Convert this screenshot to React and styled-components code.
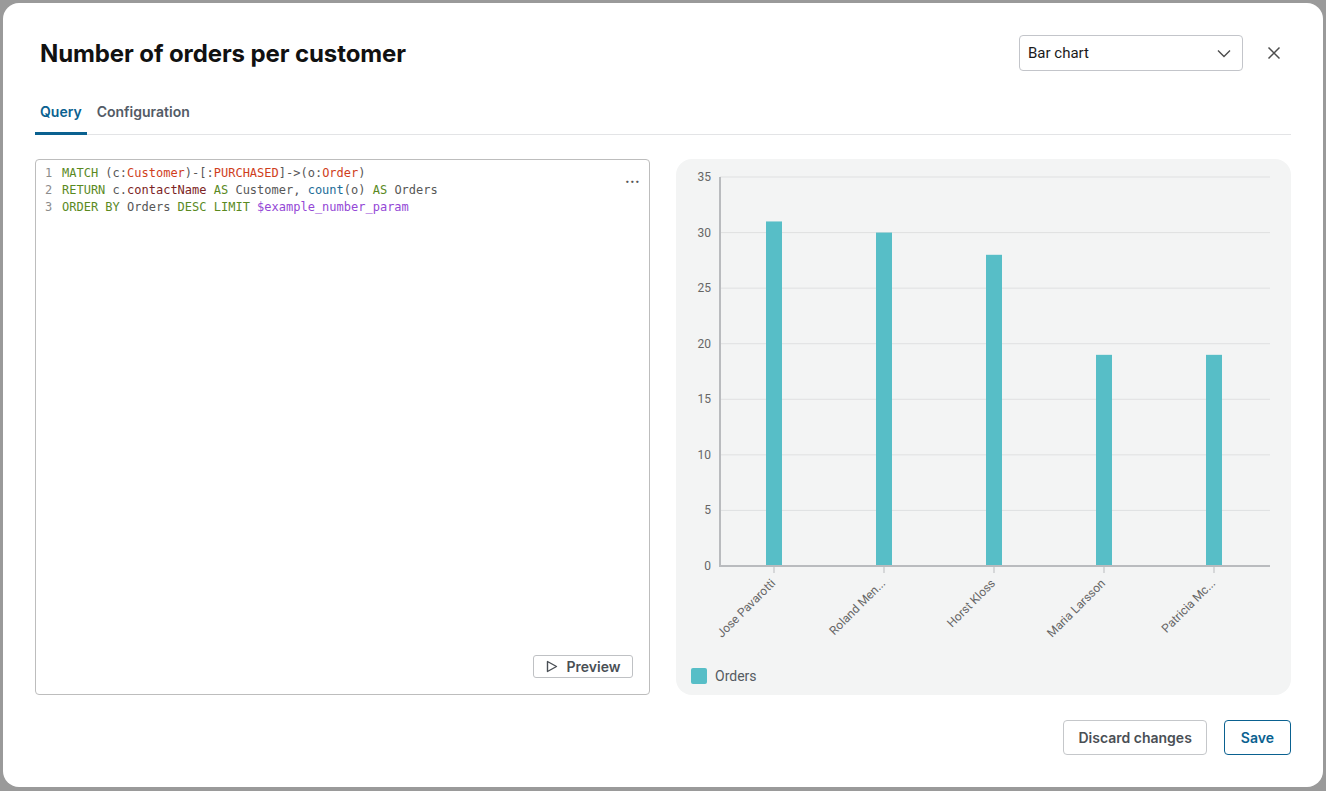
import React from "react";
import styled, { createGlobalStyle } from "styled-components";

const GlobalStyle = createGlobalStyle`
  html, body {
    margin: 0;
    padding: 0;
    background: #9a9a9a;
  }
  * {
    box-sizing: border-box;
  }
`;

const PRIMARY = "#0a6190";

const SBackdrop = styled.div`
  width: 1326px;
  height: 791px;
  padding: 3px;
  background: #9a9a9a;
`;

const SModal = styled.div`
  display: flex;
  flex-direction: column;
  width: 1320px;
  height: 784px;
  padding: 32px;
  background: #fff;
  border-radius: 16px;
  font-family: Inter, "Liberation Sans", sans-serif;
`;

const SHeader = styled.div`
  display: flex;
  align-items: center;
  justify-content: space-between;
  height: 36px;
`;

const STitle = styled.h1`
  margin: 0 0 0 5px;
  font-size: 24px;
  font-weight: 700;
  color: #111;
  letter-spacing: -0.1px;
`;

const SHeaderRight = styled.div`
  display: flex;
  align-items: center;
  gap: 14px;
`;

const SSelect = styled.div`
  display: flex;
  align-items: center;
  justify-content: space-between;
  width: 224px;
  height: 36px;
  padding: 0 10px 0 8px;
  border: 1px solid #c3c5ca;
  border-radius: 4px;
  font-family: Roboto, "Liberation Sans", sans-serif;
  font-size: 15px;
  color: #1a1a1a;
`;

const SIconButton = styled.button`
  display: flex;
  align-items: center;
  justify-content: center;
  width: 34px;
  height: 34px;
  padding: 0;
  border: none;
  background: none;
  color: #4d4d4d;
`;

const STabs = styled.div`
  display: flex;
  gap: 5px;
  margin-top: 18px;
  border-bottom: 1px solid #e3e4e6;
`;

const STab = styled.div`
  display: flex;
  align-items: center;
  height: 46px;
  padding: 2px 5px 0;
  margin-bottom: -1px;
  font-size: 14px;
  font-weight: 600;
  color: ${(p) => (p.$active ? PRIMARY : "#535b66")};
  border-bottom: 3px solid ${(p) => (p.$active ? PRIMARY : "transparent")};
  border-radius: 2px 2px 0 0;
`;

const SContent = styled.div`
  display: grid;
  grid-template-columns: 615px 615px;
  justify-content: space-between;
  margin-top: 24px;
  height: 536px;
`;

const SEditor = styled.div`
  position: relative;
  display: flex;
  flex-direction: column;
  border: 1px solid #bdbdbd;
  border-radius: 4px;
`;

const SCode = styled.div`
  flex: 1;
  padding-top: 5px;
  font-family: "DejaVu Sans Mono", "Liberation Mono", monospace;
  font-size: 12px;
  line-height: 17px;
`;

const SLine = styled.div`
  display: flex;
  white-space: pre;
`;

const SLineNo = styled.span`
  width: 26px;
  padding-left: 9px;
  color: #8c8c8c;
`;

const TOKEN_COLORS = {
  kw: "#5a8a1f",
  label: "#cf3e1c",
  plain: "#575757",
  prop: "#7c2424",
  fn: "#1b6c97",
  param: "#9448d6",
};

const SToken = styled.span`
  color: ${(p) => TOKEN_COLORS[p.$kind]};
`;

const SMore = styled.div`
  position: absolute;
  top: 13px;
  right: 9px;
  font-size: 14px;
  line-height: 10px;
  letter-spacing: 0.3px;
  color: #555;
  font-weight: 700;
`;

const SEditorFooter = styled.div`
  display: flex;
  justify-content: flex-end;
  padding: 0 16px 16px;
`;

const SPreview = styled.button`
  display: flex;
  align-items: center;
  justify-content: center;
  gap: 9px;
  width: 100px;
  height: 23px;
  border: 1px solid #bfc1c4;
  border-radius: 3px;
  background: #fff;
  font-family: Inter, "Liberation Sans", sans-serif;
  font-size: 14px;
  font-weight: 600;
  color: #4a4f55;
`;

const SChartPanel = styled.div`
  display: flex;
  flex-direction: column;
  background: #f3f4f4;
  border-radius: 16px;
  font-family: Roboto, "Liberation Sans", sans-serif;
`;

const SLegend = styled.div`
  display: flex;
  align-items: center;
  gap: 8px;
  margin-top: 9px;
  padding-left: 15px;
  font-size: 14px;
  color: #555b61;
`;

const SSwatch = styled.span`
  width: 16px;
  height: 16px;
  border-radius: 2px;
  background: #57bec7;
`;

const SFooter = styled.div`
  display: flex;
  justify-content: flex-end;
  gap: 17px;
  margin-top: 25px;
`;

const SButton = styled.button`
  height: 35px;
  padding: 0 ${(p) => (p.$primary ? 16 : 14)}px;
  border: 1px solid ${(p) => (p.$primary ? PRIMARY : "#c5c7ca")};
  border-radius: 4px;
  background: #fff;
  font-family: Inter, "Liberation Sans", sans-serif;
  font-size: 14px;
  font-weight: 600;
  color: ${(p) => (p.$primary ? PRIMARY : "#4a4f55")};
`;

const codeLines = [
  [
    ["kw", "MATCH "],
    ["plain", "(c:"],
    ["label", "Customer"],
    ["plain", ")-[:"],
    ["label", "PURCHASED"],
    ["plain", "]->(o:"],
    ["label", "Order"],
    ["plain", ")"],
  ],
  [
    ["kw", "RETURN "],
    ["plain", "c."],
    ["prop", "contactName"],
    ["kw", " AS "],
    ["plain", "Customer, "],
    ["fn", "count"],
    ["plain", "(o) "],
    ["kw", "AS "],
    ["plain", "Orders"],
  ],
  [
    ["kw", "ORDER BY "],
    ["plain", "Orders "],
    ["kw", "DESC LIMIT "],
    ["param", "$example_number_param"],
  ],
];

const data = [
  { name: "Jose Pavarotti", value: 31 },
  { name: "Roland Men...", value: 30 },
  { name: "Horst Kloss", value: 28 },
  { name: "Maria Larsson", value: 19 },
  { name: "Patricia Mc...", value: 19 },
];

const BarChart = () => {
  const left = 44;
  const right = 594;
  const top = 18;
  const bottom = 407;
  const max = 35;
  const scale = (v) => bottom - ((bottom - top) * v) / max;
  const step = (right - left) / data.length;
  const ticks = [0, 5, 10, 15, 20, 25, 30, 35];

  return (
    <svg width="614" height="500" style={{ display: "block" }}>
      {ticks.map((t) => (
        <g key={t}>
          {t > 0 && (
            <line x1={left} x2={right} y1={scale(t)} y2={scale(t)} stroke="#dfe0e1" strokeWidth="1" />
          )}
          <text x={35} y={scale(t) + 4} textAnchor="end" fontSize="12" fill="#666">
            {t}
          </text>
        </g>
      ))}
      {data.map((d, i) => {
        const cx = left + step * i + step / 2 - 1;
        return (
          <g key={d.name}>
            <rect x={cx - 8} y={scale(d.value)} width="16" height={bottom - scale(d.value)} fill="#57bec7" />
            <line x1={cx} x2={cx} y1={bottom} y2={bottom + 7} stroke="#b9bbbe" strokeWidth="1" />
            <text
              x={cx + 2}
              y={bottom + 18}
              textAnchor="end"
              fontSize="12"
              fill="#666"
              transform={`rotate(-45 ${cx + 2} ${bottom + 18})`}
            >
              {d.name}
            </text>
          </g>
        );
      })}
      <line x1={left} x2={left} y1={top} y2={bottom} stroke="#b9bbbe" strokeWidth="2" />
      <line x1={left - 1} x2={right} y1={bottom} y2={bottom} stroke="#b9bbbe" strokeWidth="2" />
    </svg>
  );
};

export default function App() {
  return (
    <SBackdrop>
      <GlobalStyle />
      <SModal>
        <SHeader>
          <STitle>Number of orders per customer</STitle>
          <SHeaderRight>
            <SSelect>
              <span>Bar chart</span>
              <svg width="16" height="16" viewBox="0 0 16 16" fill="none" stroke="#4d4d4d" strokeWidth="1.4">
                <path d="M2 5.5l6 6 6-6" />
              </svg>
            </SSelect>
            <SIconButton>
              <svg width="16" height="16" viewBox="0 0 16 16" fill="none" stroke="currentColor" strokeWidth="1.5">
                <path d="M2.5 2.5l11 11M13.5 2.5l-11 11" />
              </svg>
            </SIconButton>
          </SHeaderRight>
        </SHeader>

        <STabs>
          <STab $active>Query</STab>
          <STab>Configuration</STab>
        </STabs>

        <SContent>
          <SEditor>
            <SCode>
              {codeLines.map((line, i) => (
                <SLine key={i}>
                  <SLineNo>{i + 1}</SLineNo>
                  {line.map(([kind, text], j) => (
                    <SToken key={j} $kind={kind}>
                      {text}
                    </SToken>
                  ))}
                </SLine>
              ))}
            </SCode>
            <SMore>...</SMore>
            <SEditorFooter>
              <SPreview>
                <svg width="12" height="13" viewBox="0 0 12 13" fill="none" stroke="#4a4f55" strokeWidth="1.4">
                  <path d="M1.5 1.5v10l9-5z" strokeLinejoin="round" />
                </svg>
                Preview
              </SPreview>
            </SEditorFooter>
          </SEditor>

          <SChartPanel>
            <BarChart />
            <SLegend>
              <SSwatch />
              Orders
            </SLegend>
          </SChartPanel>
        </SContent>

        <SFooter>
          <SButton>Discard changes</SButton>
          <SButton $primary>Save</SButton>
        </SFooter>
      </SModal>
    </SBackdrop>
  );
}
